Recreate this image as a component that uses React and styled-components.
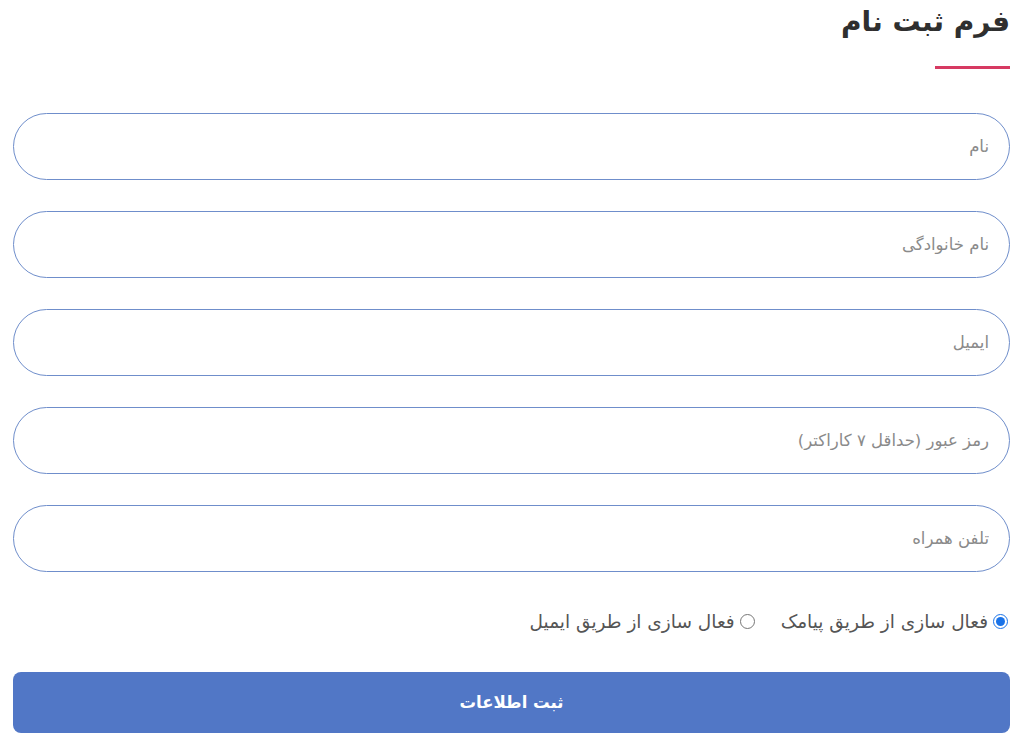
import React, { useState } from 'react';
import styled, { createGlobalStyle } from 'styled-components';

const GlobalStyle = createGlobalStyle`
    html, body {
        margin: 0;
        padding: 0;
        background: #ffffff;
    }
    body {
        font-family: "DejaVu Sans", "Noto Sans", sans-serif;
    }
`;

const Page = styled.div`
    direction: rtl;
    width: 1024px;
    height: 744px;
    box-sizing: border-box;
    padding: 0 14px 0 13px;
    overflow: hidden;
`;

const Header = styled.div`
    display: flex;
    flex-direction: column;
    align-items: flex-start;
    padding-top: 3px;

    .title {
        margin: 0;
        font-size: 28px;
        font-weight: bold;
        color: #2f2f2f;
        line-height: 38px;
    }

    .underline {
        width: 75px;
        height: 3px;
        background: #d63a62;
        margin-top: 25px;
    }
`;

const Form = styled.form`
    display: flex;
    flex-direction: column;
    gap: 31px;
    margin-top: 44px;
`;

const Input = styled.input`
    width: 100%;
    height: 67px;
    box-sizing: border-box;
    border: solid 1.5px #6f8ecb;
    border-radius: 34px;
    padding: 0 20px;
    font-family: "DejaVu Sans", sans-serif;
    font-size: 16.5px;
    color: #333;
    background: #ffffff;
    outline: none;
    direction: rtl;

    &::placeholder {
        color: #8a8a8a;
    }
`;

const RadioRow = styled.div`
    display: flex;
    align-items: center;
    gap: 24px;
    margin-top: 3px;
    height: 30px;
`;

const RadioLabel = styled.label`
    display: flex;
    align-items: center;
    font-size: 18.5px;
    color: #555;
    cursor: pointer;

    input {
        margin: 0 2px 0 5px;
        width: 15px;
        height: 15px;
        accent-color: #1a73e8;
    }
`;

const SubmitButton = styled.button`
    width: 100%;
    height: 61px;
    margin-top: 5px;
    border: none;
    border-radius: 8px;
    background: #5177c6;
    color: #ffffff;
    font-family: "DejaVu Sans", sans-serif;
    font-size: 16.5px;
    font-weight: bold;
    cursor: pointer;
`;

const fields = [
    'نام',
    'نام خانوادگی',
    'ایمیل',
    'رمز عبور (حداقل ۷ کاراکتر)',
    'تلفن همراه',
];

function App() {
    const [method, setMethod] = useState('sms');

    return (
        <>
            <GlobalStyle />
            <Page>
                <Header>
                    <h2 className="title">فرم ثبت نام</h2>
                    <div className="underline"></div>
                </Header>
                <Form onSubmit={(e) => e.preventDefault()}>
                    {fields.map((f) => (
                        <Input key={f} placeholder={f} />
                    ))}
                    <RadioRow>
                        <RadioLabel>
                            <input
                                type="radio"
                                name="method"
                                checked={method === 'sms'}
                                onChange={() => setMethod('sms')}
                            />
                            فعال سازی از طریق پیامک
                        </RadioLabel>
                        <RadioLabel>
                            <input
                                type="radio"
                                name="method"
                                checked={method === 'email'}
                                onChange={() => setMethod('email')}
                            />
                            فعال سازی از طریق ایمیل
                        </RadioLabel>
                    </RadioRow>
                    <SubmitButton type="submit">ثبت اطلاعات</SubmitButton>
                </Form>
            </Page>
        </>
    );
}

export default App;
